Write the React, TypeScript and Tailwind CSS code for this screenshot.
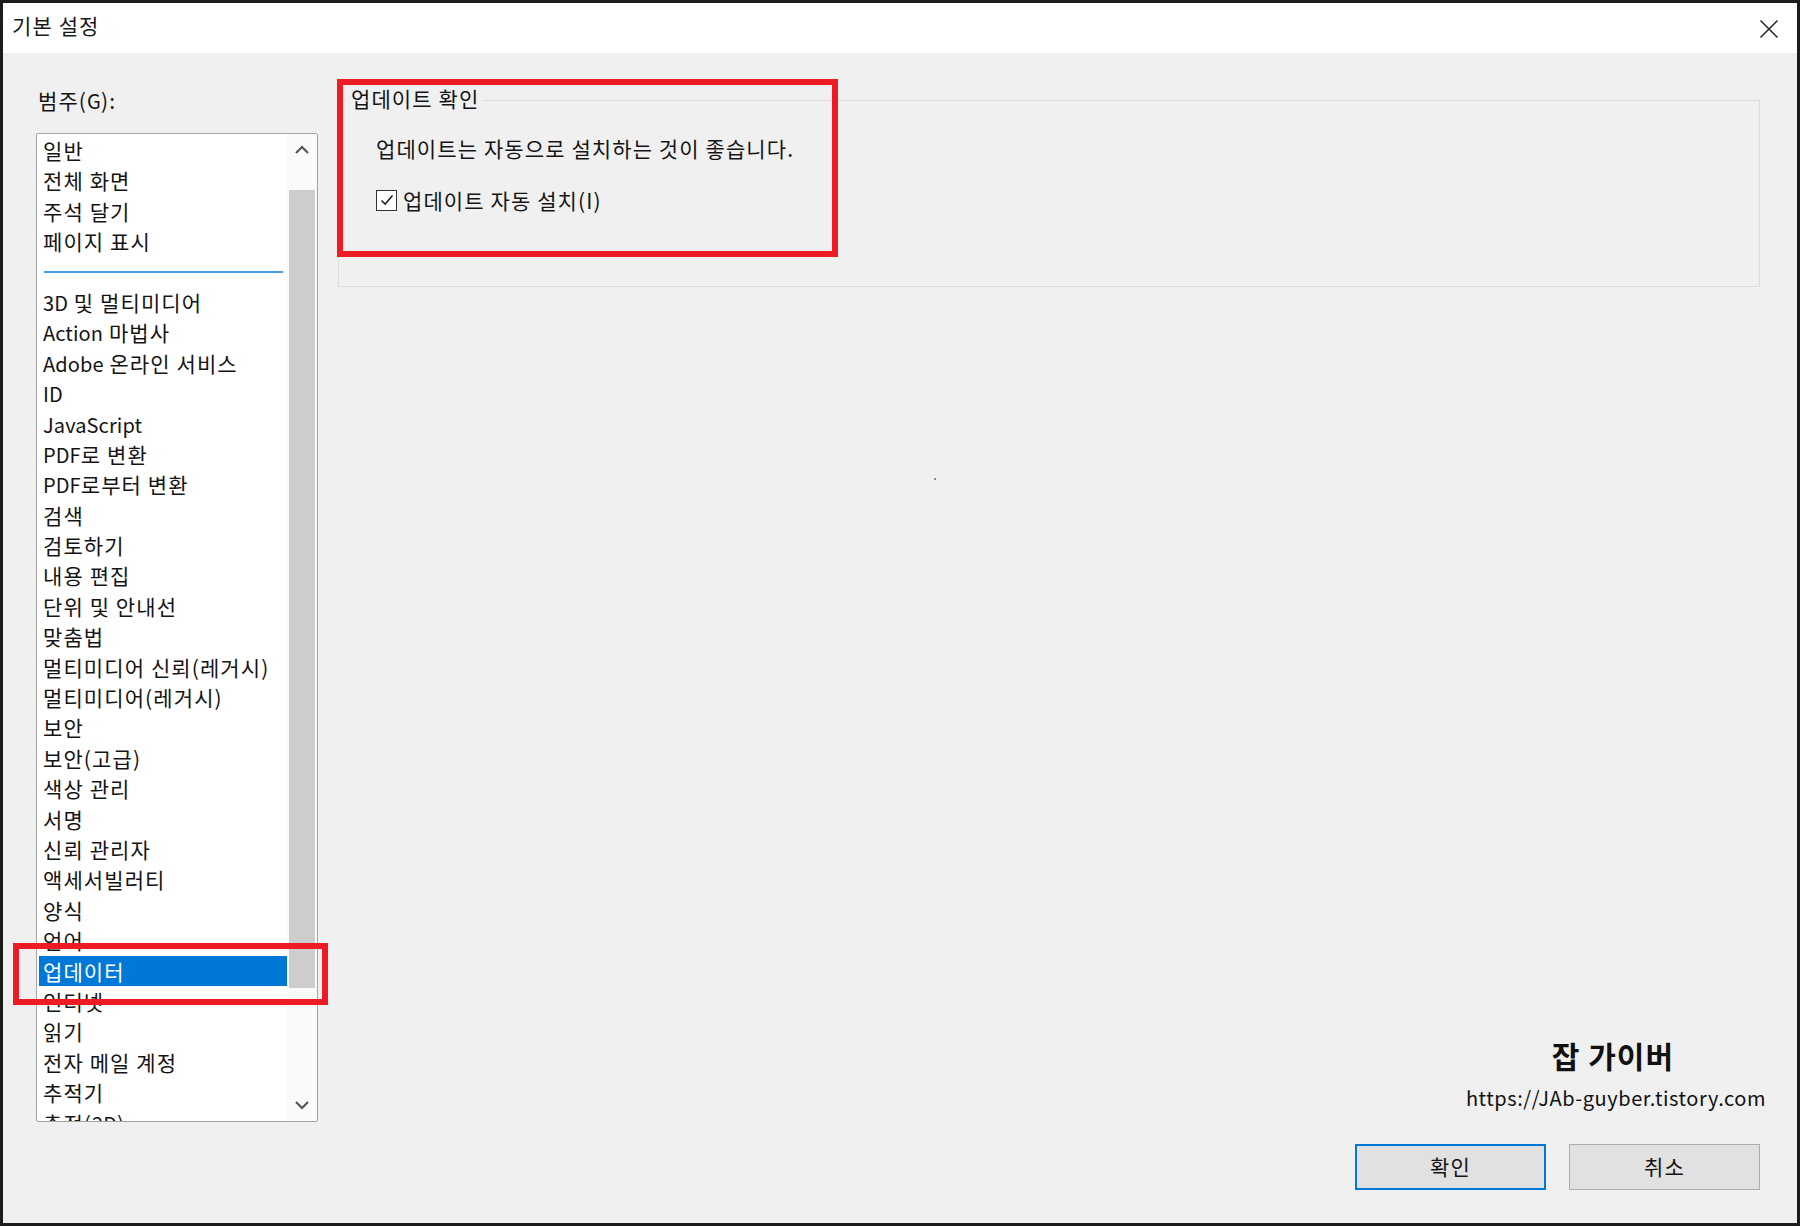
import React from 'react';

const topItems = ['일반', '전체 화면', '주석 달기', '페이지 표시'];
const restItems = [
  '3D 및 멀티미디어',
  'Action 마법사',
  'Adobe 온라인 서비스',
  'ID',
  'JavaScript',
  'PDF로 변환',
  'PDF로부터 변환',
  '검색',
  '검토하기',
  '내용 편집',
  '단위 및 안내선',
  '맞춤법',
  '멀티미디어 신뢰(레거시)',
  '멀티미디어(레거시)',
  '보안',
  '보안(고급)',
  '색상 관리',
  '서명',
  '신뢰 관리자',
  '액세서빌러티',
  '양식',
  '언어',
  '업데이터',
  '인터넷',
  '읽기',
  '전자 메일 계정',
  '추적기',
  '측정(2D)',
];

function Mixed({ text }: { text: string }) {
  const parts = text.split(/([A-Za-z0-9]+)/);
  return (
    <>
      {parts.map((p, i) =>
        /^[A-Za-z0-9]+$/.test(p) ? (
          <span key={i} className="tracking-[0.1px] text-[20px]">
            {p}
          </span>
        ) : (
          <span key={i}>{p}</span>
        )
      )}
    </>
  );
}

function Row({ label }: { label: string }) {
  const selected = label === '업데이터';
  return (
    <div
      className={
        selected
          ? 'h-[30.4px] shrink-0 pl-[4px] leading-[30.4px] whitespace-nowrap bg-[#0078d7] text-white'
          : 'h-[30.4px] shrink-0 pl-[4px] leading-[30.4px] whitespace-nowrap text-[#141414]'
      }
    >
      <Mixed text={label} />
    </div>
  );
}

export default function App() {
  return (
    <div className="relative w-[1800px] h-[1226px] border-[3px] border-[#1c1c1c] flex flex-col font-['Noto_Sans_CJK_KR',sans-serif] text-[21px] tracking-[1.1px] text-[#141414] overflow-hidden">
      {/* Title bar */}
      <div className="h-[50px] shrink-0 bg-white flex items-center justify-between pl-[9px] pr-[18px]">
        <span className="text-[21px] leading-[28px] text-[#1a1a1a] mb-[6px]">기본 설정</span>
        <svg width="20" height="20" viewBox="0 0 20 20" className="mt-[2px]">
          <path d="M1.5 1.5 L18.5 18.5 M18.5 1.5 L1.5 18.5" stroke="#2a2a2a" strokeWidth="1.6" fill="none" />
        </svg>
      </div>

      {/* Body */}
      <div className="flex-1 bg-[#f0f0f0] flex flex-row">
        {/* Left column */}
        <div className="pl-[33px] pt-[33px] flex flex-col w-[315px] shrink-0">
          <div className="ml-[2px] leading-[28px] h-[28px]">
            <Mixed text="범주(G):" />
          </div>
          <div className="mt-[19px] h-[989px] border border-[#a5a5a5] rounded-[2px] bg-white flex flex-row overflow-hidden">
            <div className="flex-1 pl-[2px] pt-[1px] flex flex-col overflow-hidden">
              {topItems.map((t) => (
                <Row key={t} label={t} />
              ))}
              <div className="h-[30.4px] shrink-0 flex items-center pl-[5px] pr-[4px]">
                <div className="h-[2px] w-full bg-[#4a9be0]" />
              </div>
              {restItems.map((t) => (
                <Row key={t} label={t} />
              ))}
            </div>
            <div className="w-[30px] shrink-0 bg-[#fafafa] flex flex-col">
              <div className="h-[32px] flex items-center justify-center">
                <svg width="16" height="10" viewBox="0 0 16 10">
                  <path d="M2 8 L8 2 L14 8" stroke="#555" strokeWidth="2.2" fill="none" />
                </svg>
              </div>
              <div className="flex-1 pt-[24px]">
                <div className="mx-[2px] h-[798px] bg-[#cdcdcd]" />
              </div>
              <div className="h-[32px] flex items-center justify-center">
                <svg width="16" height="10" viewBox="0 0 16 10">
                  <path d="M2 2 L8 8 L14 2" stroke="#555" strokeWidth="2.2" fill="none" />
                </svg>
              </div>
            </div>
          </div>
        </div>

        {/* Right column */}
        <div className="ml-[20px] w-[1422px] pt-[31px] pb-[33px] flex flex-col">
          <fieldset className="h-[203px] border border-[#dcdcdc] px-0">
            <legend className="ml-[7px] px-[5px] pb-[4px] leading-[28px]">업데이트 확인</legend>
            <div className="pl-[37px] pt-[18px] leading-[28px]">업데이트는 자동으로 설치하는 것이 좋습니다.</div>
            <div className="pl-[37px] mt-[24px] flex flex-row items-center h-[28px]">
              <div className="w-[21px] h-[21px] border-[1.5px] border-[#333] bg-white flex items-center justify-center">
                <svg width="16" height="16" viewBox="0 0 16 16">
                  <path d="M2.5 8.5 L6.2 12 L13.5 3.5" stroke="#222" strokeWidth="1.6" fill="none" />
                </svg>
              </div>
              <span className="ml-[6px] leading-[28px]">업데이트 자동 설치(I)</span>
            </div>
          </fieldset>

          <div className="flex-1" />

          <div className="self-end -mr-[6px] flex flex-col items-center tracking-normal">
            <div className="text-[30px] font-bold leading-[36px] tracking-[1px] text-[#111] mr-[6px]">잡 가이버</div>
            <div className="mt-[12px] text-[20px] leading-[26px] text-[#111] tracking-[0.55px]">https://JAb-guyber.tistory.com</div>
          </div>

          <div className="mt-[33px] flex flex-row justify-end gap-[23px]">
            <button className="w-[191px] h-[46px] border-2 border-[#0078d7] bg-[#e1e1e1] text-[21px] tracking-[1.1px] text-[#141414]">확인</button>
            <button className="w-[191px] h-[46px] border border-[#adadad] bg-[#e1e1e1] text-[21px] tracking-[1.1px] text-[#141414]">취소</button>
          </div>
        </div>
      </div>

      {/* Annotation overlays */}
      <div className="absolute left-[334px] top-[76px] w-[501px] h-[178px] border-[6px] border-[#ed1c24] pointer-events-none" />
      <div className="absolute left-[10px] top-[940px] w-[315px] h-[62px] border-[6px] border-[#ed1c24] pointer-events-none" />
      <div className="absolute left-[931px] top-[475px] w-[2px] h-[2px] bg-[#8a8a8a]" />
    </div>
  );
}
